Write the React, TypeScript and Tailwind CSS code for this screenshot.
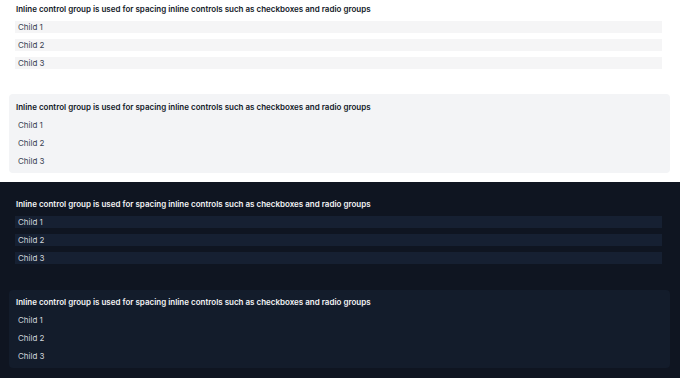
import React from "react";

const TITLE = "Inline control group is used for spacing inline controls such as checkboxes and radio groups";
const CHILDREN = ["Child 1", "Child 2", "Child 3"];

function Rows({ barClass, textClass }: { barClass: string; textClass: string }) {
  return (
    <div className="mt-1.5 flex flex-col gap-1.5">
      {CHILDREN.map((c) => (
        <div key={c} className={`h-3 pl-[3px] text-[8px] leading-3 ${barClass} ${textClass}`}>
          {c}
        </div>
      ))}
    </div>
  );
}

export default function App() {
  return (
    <div className="min-h-screen font-['Inter',sans-serif]">
      <div className="h-[182px] bg-white">
        <div className="pl-[15px] pr-[18px] pt-[3px]">
          <div className="pl-px text-[8px] font-semibold leading-3 text-[#111827]">{TITLE}</div>
          <Rows barClass="bg-[#f5f5f6]" textClass="text-[#374151]" />
        </div>
        <div className="ml-[9px] mr-[10px] mt-[25px] rounded-sm bg-[#f3f4f6] px-[6px] pb-[6px] pt-[7px]">
          <div className="pl-px text-[8px] font-semibold leading-3 text-[#111827]">{TITLE}</div>
          <Rows barClass="" textClass="text-[#374151]" />
        </div>
      </div>
      <div className="h-[196px] bg-[#0f1521]">
        <div className="pl-[15px] pr-[18px] pt-4">
          <div className="pl-px text-[8px] font-semibold leading-3 text-[#f3f4f6]">{TITLE}</div>
          <Rows barClass="bg-[#162032]" textClass="text-[#d1d5db]" />
        </div>
        <div className="ml-[9px] mr-[10px] mt-[26px] rounded-sm bg-[#131c2b] px-[6px] pb-[6px] pt-[6px]">
          <div className="pl-px text-[8px] font-semibold leading-3 text-[#f3f4f6]">{TITLE}</div>
          <Rows barClass="" textClass="text-[#d1d5db]" />
        </div>
      </div>
    </div>
  );
}
